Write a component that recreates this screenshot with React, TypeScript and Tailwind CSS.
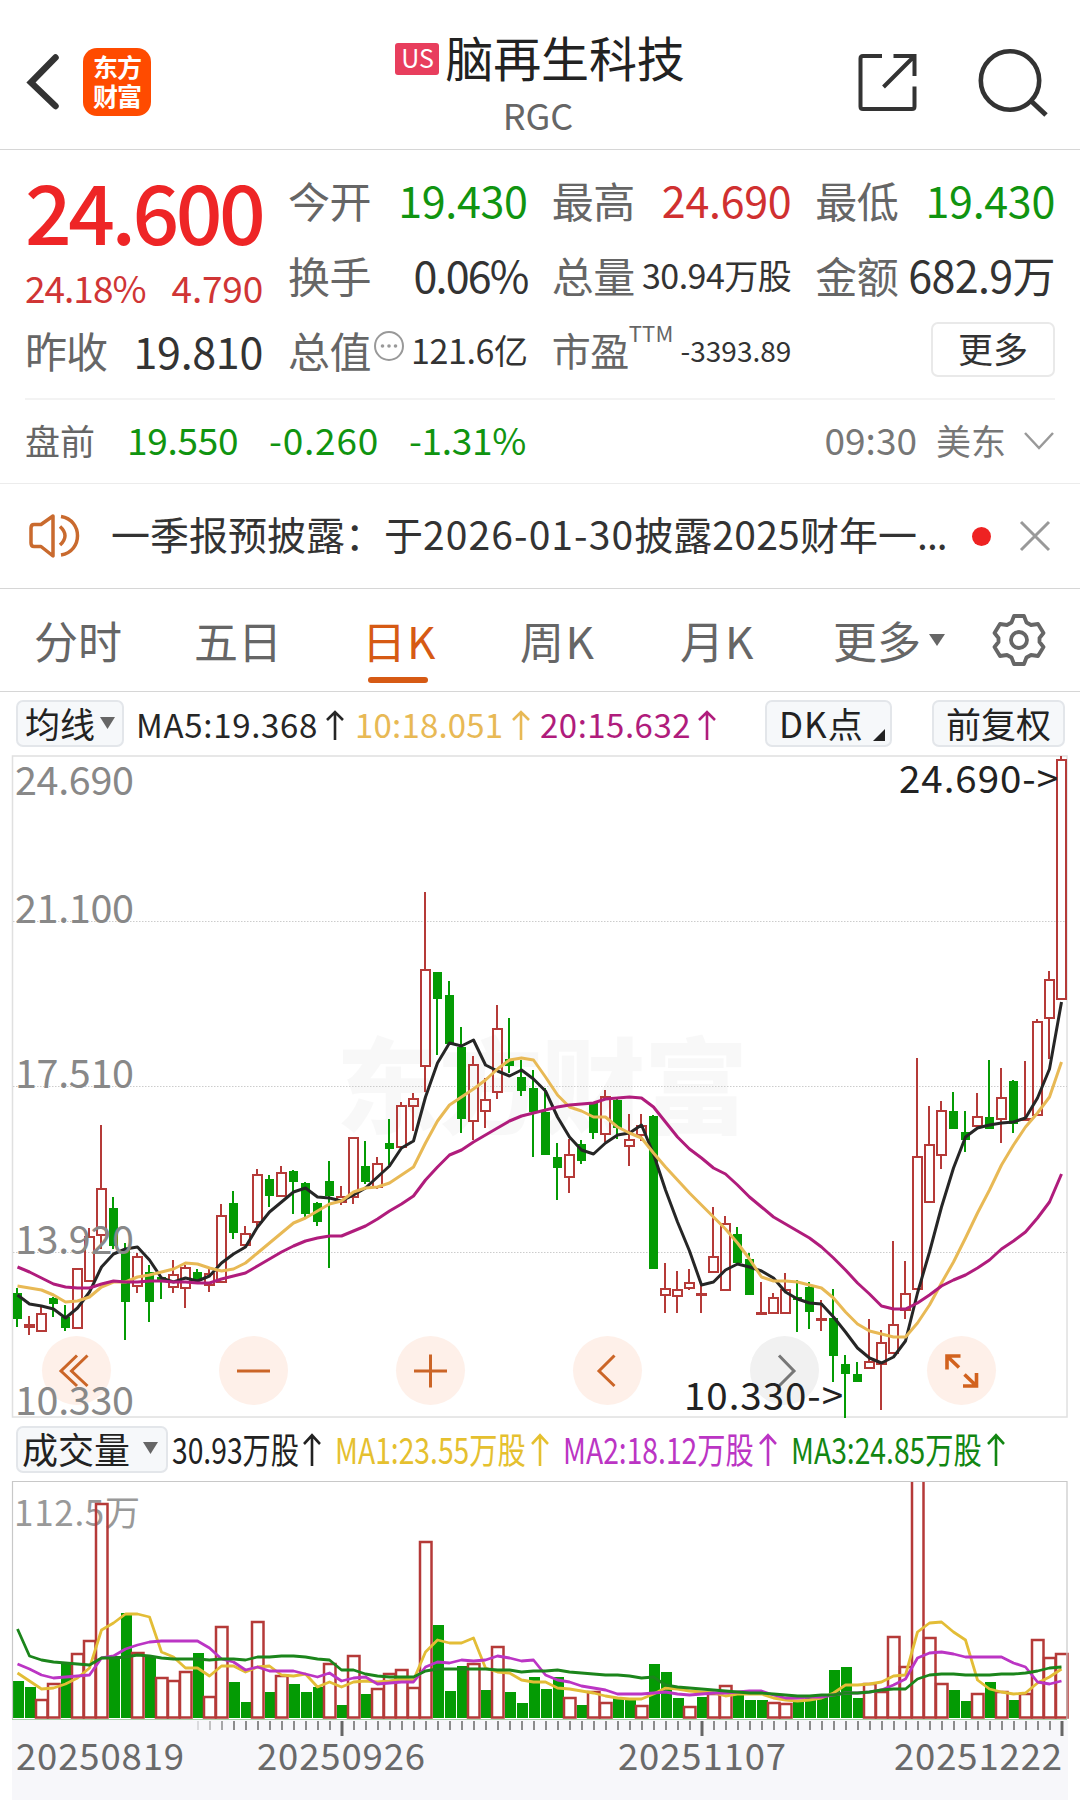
import React from 'react';

type Candle = [kind: 'r' | 'g', high: number, top: number, bottom: number, low: number];

const STEP = 12;
const FIRST_X = 17;
const RED = '#b53a38';
const GREEN = '#049b04';

const xAt = (index: number) => FIRST_X + index * STEP;

const toPoints = (values: number[]) =>
  values.map((value, index) => `${xAt(index) + 0.5},${value}`).join(' ');

const candles: Candle[] = [
  ['g', 1288, 1293, 1319, 1327], ['r', 1316, 1325, 1327, 1335], ['r', 1307, 1314, 1331, 1331],
  ['g', 1297, 1298, 1304, 1317], ['g', 1305, 1317, 1328, 1331], ['r', 1269, 1269, 1328, 1328],
  ['r', 1228, 1237, 1281, 1281], ['r', 1125, 1189, 1235, 1249], ['g', 1197, 1208, 1246, 1249],
  ['g', 1243, 1249, 1302, 1340], ['r', 1253, 1257, 1286, 1293], ['g', 1265, 1272, 1302, 1322],
  ['g', 1277, 1277, 1280, 1299], ['r', 1260, 1275, 1287, 1293], ['r', 1265, 1268, 1288, 1308],
  ['g', 1269, 1272, 1280, 1280], ['r', 1269, 1274, 1285, 1292], ['r', 1204, 1216, 1282, 1282],
  ['g', 1191, 1203, 1233, 1239], ['r', 1226, 1234, 1245, 1245], ['r', 1169, 1175, 1222, 1227],
  ['g', 1175, 1179, 1196, 1207], ['r', 1166, 1173, 1196, 1196], ['g', 1170, 1171, 1182, 1214],
  ['g', 1182, 1183, 1214, 1217], ['g', 1202, 1203, 1222, 1226], ['g', 1161, 1181, 1196, 1268],
  ['r', 1186, 1197, 1202, 1205], ['r', 1138, 1138, 1197, 1204], ['g', 1141, 1166, 1182, 1184],
  ['r', 1157, 1164, 1187, 1189], ['g', 1119, 1143, 1149, 1165], ['r', 1102, 1106, 1147, 1148],
  ['r', 1093, 1099, 1106, 1131], ['r', 892, 970, 1066, 1092], ['g', 972, 972, 999, 1055],
  ['g', 981, 995, 1044, 1044], ['g', 1027, 1047, 1119, 1133], ['r', 1056, 1065, 1121, 1140],
  ['r', 1078, 1100, 1111, 1128], ['r', 1005, 1029, 1092, 1099], ['g', 1018, 1059, 1066, 1073],
  ['g', 1060, 1077, 1091, 1096], ['g', 1070, 1088, 1112, 1157], ['g', 1088, 1112, 1155, 1155],
  ['g', 1143, 1157, 1168, 1200], ['r', 1139, 1155, 1177, 1193], ['g', 1140, 1144, 1161, 1164],
  ['g', 1102, 1103, 1133, 1139], ['r', 1090, 1097, 1134, 1142], ['g', 1099, 1100, 1128, 1139],
  ['r', 1114, 1140, 1146, 1166], ['r', 1114, 1126, 1135, 1141], ['g', 1115, 1116, 1269, 1269],
  ['r', 1263, 1289, 1295, 1313], ['r', 1271, 1290, 1296, 1313], ['r', 1269, 1283, 1288, 1290],
  ['r', 1283, 1294, 1295, 1313], ['r', 1207, 1257, 1272, 1272], ['r', 1216, 1224, 1290, 1290],
  ['g', 1227, 1234, 1263, 1263], ['g', 1253, 1259, 1295, 1295], ['r', 1282, 1313, 1314, 1314],
  ['r', 1293, 1298, 1313, 1313], ['r', 1273, 1290, 1313, 1313], ['g', 1280, 1297, 1300, 1332],
  ['g', 1282, 1287, 1312, 1329], ['r', 1300, 1319, 1320, 1331], ['g', 1289, 1318, 1356, 1382],
  ['g', 1355, 1364, 1374, 1418], ['g', 1362, 1374, 1382, 1382], ['r', 1319, 1362, 1368, 1368],
  ['r', 1330, 1343, 1364, 1410], ['r', 1241, 1325, 1353, 1353], ['r', 1261, 1294, 1310, 1319],
  ['r', 1058, 1157, 1289, 1289], ['r', 1106, 1145, 1202, 1202], ['r', 1101, 1111, 1155, 1169],
  ['g', 1092, 1111, 1129, 1129], ['g', 1111, 1132, 1140, 1152], ['r', 1093, 1117, 1126, 1126],
  ['g', 1060, 1117, 1129, 1129], ['r', 1068, 1098, 1119, 1143], ['g', 1080, 1081, 1124, 1133],
  ['r', 1061, 1119, 1120, 1120], ['r', 1019, 1022, 1115, 1115], ['r', 971, 980, 1018, 1059],
  ['r', 756, 760, 999, 999],
];

const ma5 = [
  1295, 1304, 1306, 1309, 1318, 1308, 1292, 1267, 1254, 1249, 1247, 1260, 1278, 1282, 1278, 1281,
  1276, 1263, 1254, 1247, 1227, 1212, 1202, 1192, 1188, 1197, 1198, 1201, 1195, 1188, 1177, 1166,
  1148, 1141, 1097, 1063, 1043, 1046, 1040, 1065, 1071, 1076, 1070, 1079, 1091, 1117, 1137, 1150,
  1154, 1143, 1135, 1133, 1125, 1154, 1190, 1222, 1251, 1285, 1282, 1270, 1264, 1267, 1271, 1278,
  1292, 1299, 1303, 1304, 1317, 1332, 1348, 1358, 1363, 1357, 1341, 1293, 1252, 1207, 1168, 1137,
  1128, 1125, 1123, 1122, 1118, 1098, 1069, 1002,
];

const ma10 = [
  1286, 1288, 1290, 1295, 1302, 1301, 1297, 1287, 1282, 1282, 1277, 1275, 1272, 1269, 1263, 1264,
  1268, 1271, 1269, 1263, 1253, 1243, 1233, 1223, 1218, 1211, 1204, 1201, 1192, 1188, 1187, 1183,
  1175, 1167, 1143, 1121, 1105, 1097, 1089, 1080, 1069, 1060, 1058, 1060, 1077, 1095, 1107, 1111,
  1117, 1117, 1127, 1133, 1138, 1153, 1167, 1180, 1193, 1205, 1217, 1229, 1243, 1259, 1277, 1281,
  1281, 1282, 1285, 1288, 1298, 1312, 1324, 1331, 1334, 1337, 1337, 1323, 1305, 1283, 1262, 1238,
  1213, 1190, 1165, 1145, 1127, 1113, 1097, 1062,
];

const ma20 = [
  1267, 1272, 1278, 1284, 1287, 1288, 1288, 1284, 1281, 1282, 1282, 1281, 1281, 1282, 1282, 1283,
  1283, 1279, 1276, 1273, 1266, 1259, 1252, 1246, 1241, 1238, 1236, 1236, 1231, 1226, 1219, 1211,
  1204, 1196, 1180, 1167, 1155, 1150, 1142, 1135, 1128, 1121, 1116, 1113, 1110, 1107, 1105, 1104,
  1103, 1099, 1098, 1097, 1098, 1107, 1122, 1137, 1149, 1158, 1168, 1174, 1185, 1197, 1207, 1217,
  1224, 1231, 1238, 1247, 1258, 1270, 1283, 1294, 1306, 1309, 1309, 1303, 1295, 1286, 1280, 1275,
  1268, 1260, 1249, 1241, 1232, 1218, 1202, 1174,
];

const volumeKinds = [
  'ggrrgrrrggr',
  'grrrgrrggrg',
  'rgggrgrgrrr',
  'rrgggrgrggg',
  'ggrgrrggrgg',
  'grgrrgggrrg',
  'gggggrrrrrr',
  'rggrgrgrrrr',
].join('');

const volumeTops = [
  1682, 1688, 1700, 1684, 1663, 1654, 1641, 1504, 1657, 1614, 1653, 1657, 1678, 1681, 1672, 1654,
  1697, 1627, 1683, 1703, 1622, 1693, 1676, 1685, 1693, 1688, 1664, 1706, 1656, 1695, 1689, 1674,
  1670, 1688, 1542, 1626, 1692, 1667, 1664, 1691, 1647, 1693, 1704, 1678, 1690, 1678, 1698, 1706,
  1692, 1703, 1698, 1699, 1706, 1665, 1673, 1699, 1707, 1698, 1694, 1686, 1693, 1701, 1701, 1703,
  1704, 1701, 1698, 1697, 1671, 1668, 1699, 1684, 1692, 1637, 1667, 1470, 1638, 1684, 1691, 1702,
  1694, 1683, 1692, 1701, 1694, 1640, 1658, 1654,
];

const volumeMa1 = [
  1673, 1681, 1689, 1688, 1684, 1678, 1668, 1630, 1623, 1614, 1614, 1617, 1652, 1657, 1668, 1668,
  1676, 1666, 1666, 1672, 1667, 1666, 1675, 1676, 1674, 1687, 1682, 1687, 1682, 1681, 1682, 1681,
  1679, 1680, 1652, 1640, 1643, 1643, 1638, 1668, 1672, 1673, 1680, 1682, 1682, 1688, 1689, 1691,
  1693, 1696, 1698, 1699, 1699, 1694, 1688, 1689, 1691, 1692, 1693, 1696, 1694, 1694, 1694, 1698,
  1700, 1701, 1700, 1698, 1693, 1685, 1685, 1684, 1682, 1676, 1675, 1632, 1623, 1622, 1632, 1640,
  1680, 1689, 1692, 1694, 1693, 1683, 1677, 1669,
];

const volumeMa2 = [
  1664, 1669, 1675, 1678, 1677, 1676, 1675, 1658, 1656, 1649, 1645, 1642, 1641, 1641, 1641, 1641,
  1648, 1659, 1662, 1670, 1667, 1671, 1671, 1671, 1674, 1677, 1673, 1681, 1678, 1677, 1684, 1683,
  1682, 1682, 1667, 1662, 1663, 1660, 1661, 1660, 1656, 1658, 1661, 1660, 1675, 1680, 1682, 1686,
  1688, 1690, 1694, 1694, 1694, 1693, 1692, 1694, 1695, 1694, 1693, 1693, 1692, 1691, 1691, 1695,
  1698, 1698, 1697, 1697, 1695, 1693, 1693, 1692, 1690, 1685, 1679, 1658, 1653, 1652, 1654, 1657,
  1657, 1657, 1657, 1663, 1667, 1682, 1684, 1681,
];

const volumeMa3 = [
  1629, 1656, 1660, 1662, 1663, 1664, 1665, 1658, 1658, 1657, 1655, 1656, 1658, 1659, 1659, 1659,
  1660, 1659, 1659, 1660, 1657, 1657, 1656, 1656, 1657, 1659, 1660, 1670, 1670, 1674, 1676, 1677,
  1677, 1677, 1671, 1669, 1669, 1669, 1669, 1669, 1670, 1670, 1672, 1671, 1671, 1670, 1672, 1673,
  1674, 1675, 1675, 1676, 1678, 1677, 1685, 1687, 1688, 1689, 1690, 1691, 1692, 1693, 1693, 1694,
  1695, 1696, 1696, 1695, 1695, 1693, 1693, 1692, 1690, 1689, 1689, 1679, 1675, 1674, 1674, 1675,
  1675, 1675, 1674, 1674, 1673, 1671, 1668, 1667,
];

const priceLabels = [
  { text: '24.690', y: 795 },
  { text: '21.100', y: 923 },
  { text: '17.510', y: 1088 },
  { text: '13.920', y: 1254 },
  { text: '10.330', y: 1415 },
];

const dateLabels = [
  { text: '20250819', x: 16 },
  { text: '20250926', x: 257 },
  { text: '20251107', x: 618 },
  { text: '20251222', x: 894 },
];

const Header: React.FC = () => (
  <header className="relative flex h-[150px] items-center justify-between border-b border-[#d6d6d6] pl-[26px] pr-[31px]">
    <div className="flex items-center gap-[22px] pt-[15px]">
      <svg width="35" height="60" viewBox="0 0 35 60" fill="none" stroke="#333" strokeWidth="6.500">
        <path d="M29.500 5.500L5 30.500L29.500 54" strokeLinecap="round" />
      </svg>
      <div className="flex h-[68px] w-[68px] flex-col items-center justify-center rounded-[14px] bg-[#ff4b00] pb-[3px] text-[25px] font-bold leading-[29px] tracking-[-1px] text-white">
        <span>东方</span>
        <span>财富</span>
      </div>
    </div>
    <div className="absolute inset-x-0 top-[30px] flex flex-col items-center">
      <div className="flex items-center gap-[6px]">
        <span className="mt-[5px] flex h-[32px] w-[44px] items-center justify-center rounded-[3px] bg-[#e83e5d] pb-[2px] text-[25px] leading-none text-white">
          US
        </span>
        <h1 className="text-[48px] leading-[52px] tracking-[-0.2px] text-[#222]">脑再生科技</h1>
      </div>
      <span className="mr-[4px] mt-[8px] text-[36px] leading-[48px] text-[#666]">RGC</span>
    </div>
    <div className="flex items-center gap-[60px] pt-[15px]">
      <svg width="60" height="60" viewBox="856 52 60 60" fill="none" stroke="#333" strokeWidth="4">
        <path d="M881 56H862Q859.500 56 859.500 58.500V106.500Q859.500 109 862 109H911Q913.500 109 913.500 106.500V86.500" />
        <path d="M892.500 56H913.500V76M882.500 87L912.500 57" />
      </svg>
      <svg width="72" height="70" viewBox="976 46 72 70" fill="none" stroke="#333" strokeWidth="4.600">
        <circle cx="1009" cy="79.500" r="29.200" />
        <path d="M1029 99L1045 114" strokeWidth="5" />
      </svg>
    </div>
  </header>
);

interface QuoteCellProps {
  label: React.ReactNode;
  children: React.ReactNode;
  valueClass: string;
}

const QuoteCell: React.FC<QuoteCellProps> = ({ label, children, valueClass }) => (
  <div className="flex h-[75px] items-center justify-between whitespace-nowrap">
    <span className="flex items-center text-[42px] leading-none tracking-[-0.5px] text-[#666]">{label}</span>
    <span className={`leading-none ${valueClass}`}>{children}</span>
  </div>
);

const Quote: React.FC = () => (
  <section className="px-[25px]">
    <div className="flex h-[250px] border-b-2 border-[#f3f3f3] pt-[12px]">
      <div className="w-[238px]">
        <div className="flex h-[95px] items-center text-[82px] font-medium leading-none tracking-[-3.500px] text-[#ee2526]">
          24.600
        </div>
        <div className="flex h-[60px] items-center justify-between text-[37px] leading-none text-[#d03535]">
          <span className="tracking-[-1px]">24.18%</span>
          <span className="tracking-[-0.2px]">4.790</span>
        </div>
        <div className="flex h-[66px] items-center justify-between leading-none">
          <span className="text-[42px] tracking-[-1px] text-[#666]">昨收</span>
          <span className="text-[43px] tracking-[-0.3px] text-[#333]">19.810</span>
        </div>
      </div>
      <div className="ml-[25px] grid flex-1 grid-cols-3 content-start gap-x-[24px]">
        <QuoteCell label="今开" valueClass="text-[43px] tracking-[-0.3px] text-[#109410]">19.430</QuoteCell>
        <QuoteCell label="最高" valueClass="text-[43px] tracking-[-0.3px] text-[#d03030]">24.690</QuoteCell>
        <QuoteCell label="最低" valueClass="text-[43px] tracking-[-0.3px] text-[#109410]">19.430</QuoteCell>
        <QuoteCell label="换手" valueClass="text-[43px] tracking-[-1.800px] text-[#333]">0.06%</QuoteCell>
        <QuoteCell label="总量" valueClass="text-[34px] tracking-[-0.5px] text-[#333]">30.94万股</QuoteCell>
        <QuoteCell label="金额" valueClass="text-[43px] tracking-[-0.600px] text-[#333]">682.9万</QuoteCell>
        <QuoteCell
          label={
            <>
              总值
              <svg className="mb-[7px] ml-[2px]" width="32" height="32" viewBox="0 0 32 32">
                <circle cx="16" cy="16" r="14" fill="none" stroke="#999" strokeWidth="2" />
                <circle cx="9.500" cy="16" r="1.800" fill="#999" />
                <circle cx="16" cy="16" r="1.800" fill="#999" />
                <circle cx="22.500" cy="16" r="1.800" fill="#999" />
              </svg>
            </>
          }
          valueClass="text-[34px] tracking-[-0.4px] text-[#333]"
        >
          121.6亿
        </QuoteCell>
        <QuoteCell
          label={
            <>
              <span className="text-[39px]">市盈</span>
              <span className="-mt-[36px] text-[22px] tracking-[0.2px]">TTM</span>
            </>
          }
          valueClass="text-[28px] text-[#333]"
        >
          -3393.89
        </QuoteCell>
        <div className="flex h-[75px] items-center justify-end">
          <button className="h-[55px] w-[124px] rounded-[7px] border-2 border-[#e9e9e9] pb-[4px] text-[35px] leading-none text-[#333]">
            更多
          </button>
        </div>
      </div>
    </div>
    <div className="flex h-[83px] items-center pb-[5px] text-[37px] leading-none text-[#109410]">
      <span className="w-[102px] text-[35px] text-[#666]">盘前</span>
      <span className="w-[142px] tracking-[-0.3px]">19.550</span>
      <span className="w-[140px] tracking-[0.800px]">-0.260</span>
      <span className="tracking-[-0.3px]">-1.31%</span>
      <span className="ml-auto text-[#777]">09:30</span>
      <span className="ml-[19px] text-[35px] text-[#777]">美东</span>
      <svg className="ml-[17px] mt-[3px]" width="32" height="20" viewBox="0 0 32 20" fill="none" stroke="#999" strokeWidth="2.500">
        <path d="M2 2L16 17L30 2" />
      </svg>
    </div>
  </section>
);

const Notice: React.FC = () => (
  <section className="flex h-[106px] items-center border-b border-t border-b-[#d6d6d6] border-t-[#ececec] pl-[28px] pr-[28px]">
    <svg width="54" height="46" viewBox="28 513 54 46" fill="none" stroke="#c96a2e" strokeWidth="3.500">
      <path d="M53 516L41 524.500H34Q31 524.500 31 528V543Q31 546.500 34 546.500H41L53 556Z" strokeLinejoin="round" />
      <path d="M60 526.500Q70 535.500 60 545M61 516.500C83 520 83 551.500 61 555" />
    </svg>
    <p className="ml-[29px] w-[841px] whitespace-nowrap pb-[5px] text-[39px] leading-none text-[#333]">
      一季报预披露：于<span className="tracking-[1.100px]">2026-01-30</span>披露
      <span className="tracking-[0.3px]">2025</span>财年一<span className="tracking-[-1px]">...</span>
    </p>
    <span className="ml-[20px] h-[19px] w-[19px] rounded-full bg-[#ee2222]" />
    <svg className="ml-auto" width="34" height="34" viewBox="0 0 34 34" stroke="#999" strokeWidth="3">
      <path d="M3 3L31 31M31 3L3 31" />
    </svg>
  </section>
);

const Tabs: React.FC = () => (
  <nav className="flex h-[103px] border-b border-[#d6d6d6] pl-[34px] text-[44px] leading-[102px] text-[#666]">
    <span className="w-[160px]">分时</span>
    <span className="w-[168px]">五日</span>
    <span className="relative w-[158px] tracking-[1px] text-[#d65a14]">
      日K
      <i className="absolute left-[6px] top-[88px] h-[6px] w-[60px] rounded-full bg-[#d65a14]" />
    </span>
    <span className="w-[160px] tracking-[1.500px]">周K</span>
    <span className="w-[153px] tracking-[1px]">月K</span>
    <span className="flex w-[158px] items-center">
      更多
      <svg className="ml-[8px]" width="16" height="12" viewBox="0 0 16 12" fill="#666">
        <path d="M0 0H16L8 12Z" />
      </svg>
    </span>
    <svg className="mt-[23px]" width="56" height="56" viewBox="-28 -28 56 56" fill="none" stroke="#666" strokeWidth="3.800" strokeLinejoin="round">
      <path d="M-5 -24H5L7.500 -17.500L12 -15L19 -16L24.500 -7L20.500 -2V2L24.500 7L19 16L12 15L7.500 17.500L5 24H-5L-7.500 17.500L-12 15L-19 16L-24.500 7L-20.500 2V-2L-24.500 -7L-19 -16L-12 -15L-7.500 -17.500Z" />
      <circle r="8" />
    </svg>
  </nav>
);

const UpArrow: React.FC<{ className: string; height?: number }> = ({ className, height = 30 }) => (
  <svg className={className} width="18" height={height} viewBox="0 0 18 30" preserveAspectRatio="none" fill="none" stroke="currentColor" strokeWidth="2.600">
    <path d="M9 30V2M1 10L9 2L17 10" />
  </svg>
);

const IndicatorBar: React.FC = () => (
  <div className="flex h-[63px] items-center pl-[16px] pr-[15px] leading-none">
    <div className="flex h-[47px] w-[108px] items-center rounded-[7px] border-2 border-[#e3e6ea] bg-[#f6f8fa] pb-[2px] pl-[7px] text-[35px] text-[#222]">
      均线
      <svg className="ml-[5px]" width="15" height="12" viewBox="0 0 15 12" fill="#666">
        <path d="M0 0H15L7.500 12Z" />
      </svg>
    </div>
    <div className="flex w-[641px] items-center pl-[12px] pt-[2px] text-[33px]">
      <span className="flex w-[219px] items-center tracking-[0.700px] text-[#262626]">
        MA5:19.368
        <UpArrow className="ml-auto mr-[11px]" />
      </span>
      <span className="flex w-[185px] items-center tracking-[0.2px] text-[#e8b955]">
        10:18.051
        <UpArrow className="ml-auto mr-[10px]" />
      </span>
      <span className="flex w-[176px] items-center tracking-[0.5px] text-[#b01c7c]">
        20:15.632
        <UpArrow className="ml-auto" />
      </span>
    </div>
    <div className="relative flex h-[47px] w-[127px] items-center rounded-[7px] border-2 border-[#e3e6ea] bg-[#f6f8fa] pb-[2px] pl-[12px] text-[35px] tracking-[1px] text-[#222]">
      DK点
      <svg className="absolute bottom-[4px] right-[5px]" width="12" height="12" viewBox="0 0 12 12" fill="#222">
        <path d="M12 0V12H0Z" />
      </svg>
    </div>
    <div className="ml-auto flex h-[47px] w-[133px] items-center justify-center rounded-[7px] border-2 border-[#e3e6ea] bg-[#f6f8fa] pb-[2px] text-[35px] text-[#222]">
      前复权
    </div>
  </div>
);

const controls = [
  { id: 'first', path: 'M0.500 -15L-15.500 0.500L0.500 15.500M11 -15L-5 0.500L11 15.500', muted: false },
  { id: 'minus', path: 'M-16.500 0.500H16.500', muted: false },
  { id: 'plus', path: 'M-16.500 0.500H16.500M0 -16V17', muted: false },
  { id: 'prev', path: 'M7 -15L-8.500 0.500L7 15.500', muted: false },
  { id: 'next', path: 'M-5.500 -15L9.500 0.500L-5.500 15.500', muted: true },
];

const PriceChart: React.FC = () => (
  <div className="relative h-[663px]">
    <div className="absolute left-[42px] top-[581px] flex gap-[108px]">
      {controls.map((control) => (
        <button
          key={control.id}
          className={`h-[69px] w-[69px] rounded-full ${control.muted ? 'bg-[#f1f1f1]' : 'bg-[#fef0e9]'}`}
        >
          <svg width="69" height="69" viewBox="-34.500 -34.500 69 69" fill="none" stroke={control.muted ? '#777' : '#cb6527'} strokeWidth="3">
            <path d={control.path} />
          </svg>
        </button>
      ))}
      <button className="h-[69px] w-[69px] rounded-full bg-[#fef0e9]">
        <svg width="69" height="69" viewBox="-34.500 -34.500 69 69" fill="none" stroke="#d2621e" strokeWidth="3.600">
          <path d="M-14.500 -1V-14.500H-1M-14.500 -14.500L-2.500 -3M15 2.500V15.500H1.500M15 15.500L3 4" />
        </svg>
      </button>
    </div>
    <svg
      className="pointer-events-none relative"
      width="1080"
      height="663"
      viewBox="0 755 1080 663"
      fontFamily='"Noto Sans CJK SC", sans-serif'
    >
      <text x="336" y="1126" fontSize="104" fontWeight="900" fill="#000" fillOpacity="0.028" textLength="412">
        东方财富
      </text>
      <rect x="12.500" y="756" width="1054.500" height="661" fill="none" stroke="#e0e0e0" strokeWidth="1.500" />
      {[921.5, 1086.5, 1252.5].map((y) => (
        <path key={y} d={`M13 ${y}H1067`} stroke="#ccc" strokeDasharray="1.500 1.500" />
      ))}
      {candles.map(([kind, high, top, bottom, low], index) => {
        const x = xAt(index);
        const color = kind === 'r' ? RED : GREEN;
        return (
          <g key={index} stroke={color} strokeWidth="2">
            <path d={`M${x} ${high}V${top}M${x} ${bottom}V${low}`} />
            {kind === 'r' ? (
              <rect x={x - 4} y={top} width="9" height={bottom - top} fill="none" />
            ) : (
              <rect x={x - 4} y={top} width="9" height={bottom - top} fill={color} stroke="none" />
            )}
          </g>
        );
      })}
      <g fill="none" strokeWidth="3" strokeLinejoin="round">
        <polyline points={toPoints(ma5)} stroke="#262626" />
        <polyline points={toPoints(ma10)} stroke="#e8b955" />
        <polyline points={toPoints(ma20)} stroke="#b01c7c" />
      </g>
      <g fontSize="39.500" fill="#888">
        {priceLabels.map((label) => (
          <text key={label.text} x="15" y={label.y} textLength="119">
            {label.text}
          </text>
        ))}
      </g>
      <g fontSize="38.500" fill="#222">
        <text x="899" y="793" textLength="159">{'24.690->'}</text>
        <text x="684" y="1410" textLength="159">{'10.330->'}</text>
      </g>
    </svg>
  </div>
);

const volumeLegend = [
  { text: '30.93万股', className: 'w-[163px] text-[#222]' },
  { text: 'MA1:23.55万股', className: 'w-[228px] text-[#e5c02f]' },
  { text: 'MA2:18.12万股', className: 'w-[228px] text-[#bb35c4]' },
  { text: 'MA3:24.85万股', className: 'w-[228px] text-[#128612]' },
];

const VolumeBar: React.FC = () => (
  <div className="flex h-[63px] items-center pl-[16px] leading-none">
    <div className="flex h-[47px] w-[152px] shrink-0 items-center rounded-[7px] border-2 border-[#e3e6ea] bg-[#f6f8fa] pb-[3px] pl-[4px] text-[36px] text-[#222]">
      成交量
      <svg className="ml-[13px]" width="15" height="12" viewBox="0 0 15 12" fill="#666">
        <path d="M0 0H15L7.500 12Z" />
      </svg>
    </div>
    <div className="flex pb-[3px] pl-[4px]">
      {volumeLegend.map((item) => (
        <div key={item.text} className={`flex shrink-0 items-center ${item.className}`}>
          <span className="w-0 flex-1 origin-left scale-x-[0.785] whitespace-nowrap text-[36px]">{item.text}</span>
          <UpArrow className="mr-[14px] mt-[3px] shrink-0" height={33} />
        </div>
      ))}
    </div>
  </div>
);

const VolumeChart: React.FC = () => (
  <svg
    className="block"
    width="1080"
    height="319"
    viewBox="0 1481 1080 319"
    fontFamily='"Noto Sans CJK SC", sans-serif'
  >
    <rect x="12" y="1720" width="1056" height="80" fill="#f7f7fa" />
    <text x="14" y="1526" fontSize="35" fill="#999" textLength="126">
      112.5万
    </text>
    {volumeTops.map((top, index) => {
      const x = xAt(index);
      return volumeKinds[index] === 'r' ? (
        <rect key={index} x={x - 5} y={top} width="11.500" height={1717.5 - top} fill="none" stroke={RED} strokeWidth="2.500" />
      ) : (
        <rect key={index} x={x - 4} y={top - 1} width="11" height={1719 - top} fill={GREEN} />
      );
    })}
    <path d="M12.500 1719V1481.500H1067V1719" fill="none" stroke="#c8c8c8" strokeWidth="1.200" />
    <path d="M12 1719.500H1067" stroke="#a9cfa9" />
    <g fill="none" strokeWidth="2.800" strokeLinejoin="round">
      <polyline points={toPoints(volumeMa1)} stroke="#e3bd36" />
      <polyline points={toPoints(volumeMa2)} stroke="#bb35c4" />
      <polyline points={toPoints(volumeMa3)} stroke="#1b851b" />
    </g>
    {candles.map((_, index) => {
      if (index < 15) return null;
      const major = index === 27 || index === 57 || index === 87;
      return (
        <path
          key={index}
          d={`M${xAt(index) + 1} 1721V${major ? 1736 : 1730}`}
          stroke={major ? '#666' : '#8c8c8c'}
          strokeWidth={major ? 3 : 2}
          opacity={index < 18 ? (index - 14) * 0.25 : 1}
        />
      );
    })}
    <g fontSize="36.500" fill="#696969">
      {dateLabels.map((label) => (
        <text key={label.text} x={label.x} y="1770" textLength="168">
          {label.text}
        </text>
      ))}
    </g>
  </svg>
);

export default function App() {
  return (
    <main className="h-[1800px] w-[1080px] overflow-hidden bg-white font-['Noto_Sans_CJK_SC',sans-serif]">
      <Header />
      <Quote />
      <Notice />
      <Tabs />
      <IndicatorBar />
      <PriceChart />
      <VolumeBar />
      <VolumeChart />
    </main>
  );
}
